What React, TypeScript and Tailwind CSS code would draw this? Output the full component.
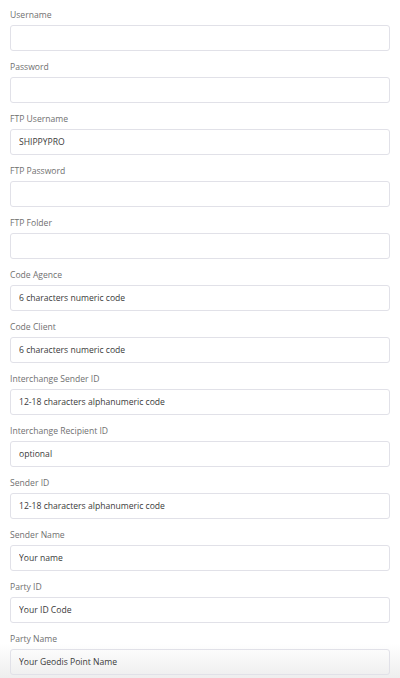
import React from 'react';

const fields = [
  { label: 'Username', value: '' },
  { label: 'Password', value: '' },
  { label: 'FTP Username', value: 'SHIPPYPRO' },
  { label: 'FTP Password', value: '' },
  { label: 'FTP Folder', value: '' },
  { label: 'Code Agence', value: '6 characters numeric code' },
  { label: 'Code Client', value: '6 characters numeric code' },
  { label: 'Interchange Sender ID', value: '12-18 characters alphanumeric code' },
  { label: 'Interchange Recipient ID', value: 'optional' },
  { label: 'Sender ID', value: '12-18 characters alphanumeric code' },
  { label: 'Sender Name', value: 'Your name' },
  { label: 'Party ID', value: 'Your ID Code' },
  { label: 'Party Name', value: 'Your Geodis Point Name' },
];

const App = () => {
  return (
    <div className="relative min-h-screen bg-white" style={{ fontFamily: '"Open Sans", "Liberation Sans", sans-serif' }}>
      {/* bottom fade sits behind the form */}
      <div className="pointer-events-none absolute left-0 right-0 top-[644px] h-[34px] bg-gradient-to-b from-[#ffffff] to-[#eeeeee]" />
      <div className="relative flex flex-col gap-[10px] pl-[10px] pr-[10px] pt-[9px]">
        {fields.map((f) => (
          <div key={f.label} className="flex flex-col">
            <label className="mb-[4px] text-[8.6px] leading-[12px] text-[#707070]">{f.label}</label>
            <input
              readOnly
              value={f.value}
              className="h-[26px] w-full rounded-[3px] border border-[#e1e1e8] bg-transparent px-[8px] text-[8.6px] text-[#3a3a3a] outline-none"
            />
          </div>
        ))}
      </div>
    </div>
  );
};

export default App;
